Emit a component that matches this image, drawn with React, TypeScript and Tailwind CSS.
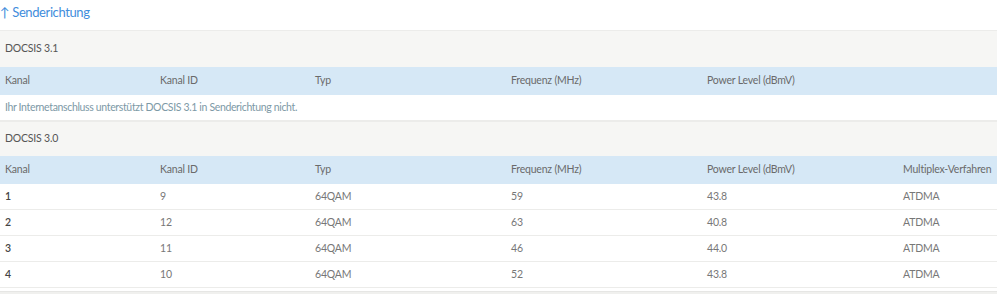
import React from "react";

const cols = "grid grid-cols-[155px_155px_196px_196px_196px_1fr]";
const headers = ["Kanal", "Kanal ID", "Typ", "Frequenz (MHz)", "Power Level (dBmV)"];
const rows = [
  ["1", "9", "64QAM", "59", "43.8", "ATDMA"],
  ["2", "12", "64QAM", "63", "40.8", "ATDMA"],
  ["3", "11", "64QAM", "46", "44.0", "ATDMA"],
  ["4", "10", "64QAM", "52", "43.8", "ATDMA"],
];

function Section({ title, h }: { title: string; h: string }) {
  return (
    <div className={`${h} flex items-center pl-[5px] bg-[#f6f6f4] border-t border-[#ececea] text-[#555] text-[10.5px] tracking-[-0.2px]`}>
      {title}
    </div>
  );
}

function Head({ cells }: { cells: string[] }) {
  return (
    <div className={`${cols} h-[28px] items-center bg-[#d6e8f6] text-[#6a6a6a] text-[10.5px] tracking-[-0.2px]`}>
      {cells.map((c, i) => (
        <div key={i} className="pl-[5px] whitespace-nowrap">{c}</div>
      ))}
    </div>
  );
}

export default function App() {
  return (
    <div className="w-[999px] h-[295px] bg-white overflow-hidden" style={{ fontFamily: "Lato, 'Noto Sans', sans-serif" }}>
      <div className="h-[30px] flex items-center text-[13px] tracking-[-0.4px] text-[#3f8ddc] pb-[5px]">↑ Senderichtung</div>
      <div className="w-[997px]">
        <Section title="DOCSIS 3.1" h="h-[37px]" />
        <Head cells={headers} />
        <div className="h-[26px] flex items-center pl-[5px] text-[10.5px] tracking-[-0.35px] text-[#7d99a6] border-b border-[#ececea] whitespace-nowrap">
          Ihr Internetanschluss unterstützt DOCSIS 3.1 in Senderichtung nicht.
        </div>
        <Section title="DOCSIS 3.0" h="h-[35px]" />
        <Head cells={[...headers, "Multiplex-Verfahren"]} />
        {rows.map((r, i) => (
          <div key={i} className={`${cols} h-[26px] items-center text-[10.5px] tracking-[-0.2px] text-[#777] border-b border-[#ececea]`}>
            {r.map((c, j) => (
              <div key={j} className={`pl-[5px] whitespace-nowrap ${j === 0 ? "text-[#444] font-semibold" : ""}`}>{c}</div>
            ))}
          </div>
        ))}
        <div className="h-[3px]" />
        <div className="h-[3px] bg-[#f0f0ee] border-t border-[#e6e6e4]" />
      </div>
    </div>
  );
}
